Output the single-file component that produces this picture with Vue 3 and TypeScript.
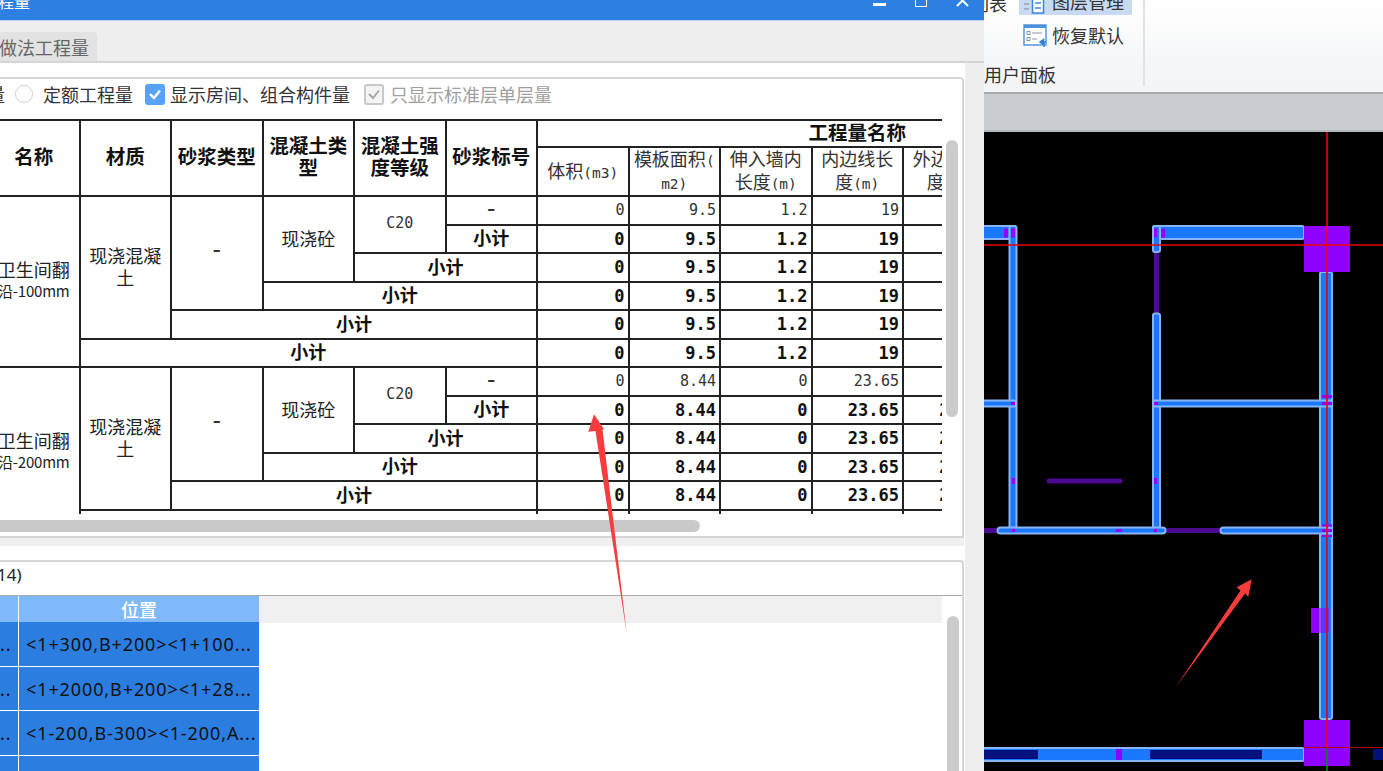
<script setup lang="ts">
interface Group {
  name: string[]
  first: string[]
  rest: string[]
}

const groups: Group[] = [
  {
    name: ['卫生间翻', '沿-100mm'],
    first: ['0', '9.5', '1.2', '19', '19'],
    rest: ['0', '9.5', '1.2', '19', '19'],
  },
  {
    name: ['卫生间翻', '沿-200mm'],
    first: ['0', '8.44', '0', '23.65', '23.65'],
    rest: ['0', '8.44', '0', '23.65', '23.65'],
  },
]

// how many columns the subtotal of rows 3 to 6 covers
const subtotalSpans = [2, 3, 4, 5]

const positions = [
  '<1+300,B+200><1+100...',
  '<1+2000,B+200><1+28...',
  '<1-200,B-300><1-200,A...',
  '',
]

function span(cols: number) {
  return { gridColumn: `span ${cols}` }
}
</script>

<template>
  <div class="screen">
    <section class="dialog">
      <header class="titlebar">
        <span class="title">程量</span>
        <div class="win-btns">
          <i class="btn-min"></i>
          <i class="btn-max"></i>
          <svg class="btn-close" width="13" height="8" viewBox="0 0 13 8">
            <path d="M1 -5 L12 6 M12 -5 L1 6" stroke="#fff" stroke-width="2" fill="none" />
          </svg>
        </div>
      </header>

      <div class="tabs">
        <div class="tab">做法工程量</div>
      </div>

      <div class="tab-body">
        <div class="panel upper">
          <div class="options">
            <span class="cut-text">量</span>
            <i class="radio"></i>
            <span class="opt">定额工程量</span>
            <i class="check on">
              <svg width="14" height="12" viewBox="0 0 14 12">
                <path d="M2 6 L6 10 L12 2.5" stroke="#fff" stroke-width="2.4" fill="none" />
              </svg>
            </i>
            <span class="opt">显示房间、组合构件量</span>
            <i class="check off">
              <svg width="14" height="12" viewBox="0 0 14 12">
                <path d="M2 6 L6 10 L12 2.5" stroke="#a8a8a8" stroke-width="2" fill="none" />
              </svg>
            </i>
            <span class="opt muted">只显示标准层单层量</span>
          </div>

          <div class="sheet-clip">
            <div class="sheet">
              <div class="cell head tall" style="grid-row: span 2">名称</div>
              <div class="cell head tall" style="grid-row: span 2">材质</div>
              <div class="cell head tall" style="grid-row: span 2">砂浆类型</div>
              <div class="cell head tall" style="grid-row: span 2">混凝土类型</div>
              <div class="cell head tall" style="grid-row: span 2">混凝土强度等级</div>
              <div class="cell head tall" style="grid-row: span 2">砂浆标号</div>
              <div class="cell head" style="grid-column: span 7">工程量名称</div>
              <div class="cell sub"><div>体积<span class="unit">(m3)</span></div></div>
              <div class="cell sub">
                <div>模板面积<span class="unit">(</span></div>
                <div class="unit">m2)</div>
              </div>
              <div class="cell sub">
                <div>伸入墙内</div>
                <div>长度<span class="unit">(m)</span></div>
              </div>
              <div class="cell sub">
                <div>内边线长</div>
                <div>度<span class="unit">(m)</span></div>
              </div>
              <div class="cell sub">
                <div>外边线长</div>
                <div>度<span class="unit">(m)</span></div>
              </div>
              <div class="cell sub"></div>
              <div class="cell sub"></div>

              <template v-for="group in groups" :key="group.name[1]">
                <div class="cell name" style="grid-row: span 6">
                  <span>{{ group.name[0] }}</span>
                  <span class="name-code">{{ group.name[1] }}</span>
                </div>
                <div class="cell text" style="grid-row: span 5">现浇混凝土</div>
                <div class="cell dash big" style="grid-row: span 4">-</div>
                <div class="cell text" style="grid-row: span 3">现浇砼</div>
                <div class="cell code" style="grid-row: span 2">C20</div>
                <div class="cell dash">-</div>
                <div v-for="(v, i) in group.first" :key="i" class="cell num">{{ v }}</div>
                <div class="cell num"></div>
                <div class="cell num"></div>

                <div class="cell total">小计</div>
                <div v-for="(v, i) in group.rest" :key="i" class="cell num bold">{{ v }}</div>
                <div class="cell num"></div>
                <div class="cell num"></div>

                <template v-for="cols in subtotalSpans" :key="cols">
                  <div class="cell total" :style="span(cols)">小计</div>
                  <div v-for="(v, i) in group.rest" :key="i" class="cell num bold">{{ v }}</div>
                  <div class="cell num"></div>
                  <div class="cell num"></div>
                </template>
              </template>
            </div>
          </div>

          <div class="hscroll"><i></i></div>
          <i class="vscroll"></i>
        </div>

        <div class="gap-band"></div>

        <div class="panel lower">
          <div class="lower-label">14)</div>
          <div class="list">
            <div class="list-head">
              <div class="lh-cell"></div>
              <div class="lh-cell">位置</div>
              <div class="lh-rest"></div>
            </div>
            <div v-for="(p, i) in positions" :key="i" class="list-row">
              <div class="sel dots">{{ p ? '..' : '' }}</div>
              <div class="sel pos">{{ p }}</div>
            </div>
            <i class="vscroll list-scroll"></i>
          </div>
        </div>
      </div>
    </section>

    <section class="workspace">
      <div class="ribbon">
        <div class="ribbon-main">
          <span class="cut-ribbon">列表</span>
          <div class="ribbon-btns">
            <div class="rb active">
              <svg width="24" height="15" viewBox="0 0 24 15">
                <path d="M1 4h5M1 9h5" stroke="#9aa4b0" stroke-width="1.5" />
                <rect x="9.5" y="-6" width="11" height="19" fill="#fff" stroke="#3a86d8" stroke-width="1.5" />
                <path d="M12 3h6M12 8h6" stroke="#3a86d8" stroke-width="1.5" />
              </svg>
              <span class="rb-cut">图层管理</span>
            </div>
            <div class="rb">
              <svg width="24" height="23" viewBox="0 0 24 23">
                <rect x="1" y="1" width="22" height="20" fill="#fff" stroke="#4a90d9" stroke-width="1.4" />
                <rect x="1" y="1" width="22" height="3" fill="#4a90d9" />
                <rect x="4" y="7.5" width="3" height="3" fill="none" stroke="#8b97a3" />
                <rect x="4" y="13.5" width="3" height="3" fill="none" stroke="#8b97a3" />
                <path d="M9 9h10M9 15h5" stroke="#8b97a3" stroke-width="1.2" />
                <path d="M23 18h-5M20.5 15.5 L17 18 L20.5 20.5 Z M21 18 v5" stroke="#2e7fd6" stroke-width="1.5" fill="#2e7fd6" />
              </svg>
              <span>恢复默认</span>
            </div>
          </div>
          <div class="ribbon-label">用户面板</div>
        </div>
        <i class="ribbon-sep"></i>
      </div>
      <div class="strip"></div>
      <div class="canvas">
        <svg width="399" height="639" viewBox="984 132 399 639">
          <g class="wall-thick">
            <rect x="980" y="226" width="36" height="13" rx="2" />
            <rect x="1153" y="226" width="151" height="13" rx="2" />
            <rect x="980" y="748" width="324" height="13" rx="2" />
          </g>
          <g class="beam">
            <rect x="984" y="528" width="14" height="5" />
            <rect x="1165" y="528" width="56" height="5" />
            <rect x="1154" y="252" width="5" height="62" />
            <rect x="1046.5" y="478.5" width="76" height="5" rx="2.5" />
          </g>
          <g class="wall">
            <rect x="1009.5" y="226" width="7" height="304" rx="2" />
            <rect x="1153" y="226" width="7" height="26" rx="2" />
            <rect x="1153" y="313.5" width="7" height="219" rx="2" />
            <rect x="1320" y="272" width="12" height="447" rx="2" />
            <rect x="980" y="400.5" width="36" height="6" rx="2" />
            <rect x="1153" y="400.5" width="179" height="6" rx="2" />
            <rect x="997.5" y="527.5" width="168" height="6" rx="3" />
            <rect x="1220.5" y="527.5" width="111" height="6" rx="3" />
          </g>
          <g class="mark">
            <rect x="1004" y="228.5" width="4" height="9" />
            <rect x="1011" y="228.5" width="4" height="9" />
            <rect x="1154" y="228.5" width="3" height="9" />
            <rect x="1161" y="228.5" width="4" height="9" />
            <rect x="1011" y="402" width="4" height="3" />
            <rect x="1154" y="402" width="4" height="3" />
            <rect x="1322" y="395" width="10" height="3" />
            <rect x="1322" y="402" width="10" height="3" />
            <rect x="1012" y="478" width="3" height="6" />
            <rect x="1154" y="478" width="3" height="6" />
            <rect x="1012" y="529" width="3" height="3" />
            <rect x="1154" y="529" width="3" height="3" />
            <rect x="1116" y="529" width="6" height="3" />
            <rect x="1322" y="524.5" width="10" height="2" />
            <rect x="1322" y="529" width="10" height="3" />
            <rect x="1322" y="535" width="10" height="2" />
          </g>
          <rect x="984" y="750" width="54" height="9" fill="#00107c" />
          <rect x="1150" y="750" width="112" height="9" fill="#00107c" />
          <rect x="1116" y="749" width="6" height="11" fill="#8f00ff" />
          <rect x="1373" y="749" width="10" height="11" fill="#00107c" />
          <rect x="1311" y="608" width="8" height="25" fill="#8f00ff" />
          <rect x="1319" y="608" width="10" height="25" fill="#8f00ff" opacity="0.55" />
          <rect x="1304" y="226" width="46" height="46" fill="#8f00ff" />
          <rect x="1304" y="720" width="46" height="46" fill="#8f00ff" />
          <path class="cross" d="M984 245H1383M1327 132V748" />
          <path class="cross dim" d="M1304 747.5H1383" />
          <path class="cross green" d="M1327 748V771" />
        </svg>
      </div>
    </section>

    <!-- red arrows someone drew on top of the screenshot -->
    <svg class="arrows" width="1383" height="771" viewBox="0 0 1383 771">
      <polygon points="626.7,633.3 595.5,431 588.3,431.7 594,414.3 604,429.3 602.5,429.5" fill="#f63c3c" />
      <polygon points="1175.7,687.3 1240.5,590.5 1236.7,587.3 1251.7,579.3 1248.3,596.7 1245,593.5" fill="#f63c3c" />
    </svg>
  </div>
</template>

<style>
html,
body {
  margin: 0;
  background: #fff;
}
</style>

<style scoped>
.screen {
  position: relative;
  display: flex;
  width: 1383px;
  height: 771px;
  overflow: hidden;
  font-family: "Noto Sans CJK SC", "Liberation Sans", sans-serif;
  color: #222;
}

.dialog {
  display: flex;
  flex-direction: column;
  width: 984px;
  flex: none;
  background: #eeeeee;
}

.titlebar {
  display: flex;
  justify-content: space-between;
  height: 20px;
  flex: none;
  overflow: hidden;
  background: #2d80e2;
  border-bottom: 1px solid #b9d3f1;
  box-sizing: content-box;
}

.title {
  margin-top: -10px;
  margin-left: -2px;
  font-size: 16px;
  line-height: 22px;
  color: #fff;
}

.win-btns {
  display: flex;
  align-items: flex-start;
  gap: 29px;
  padding-right: 15px;
}

.btn-min {
  width: 13px;
  height: 3px;
  margin-top: 3px;
  background: #fff;
}

.btn-max {
  width: 10px;
  height: 6px;
  border: 1.5px solid #fff;
  border-top: none;
}

.tabs {
  display: flex;
  align-items: flex-end;
  height: 40px;
  flex: none;
  border-bottom: 2px solid #d4d5d8;
}

.tab {
  width: 97px;
  height: 29px;
  display: flex;
  align-items: center;
  justify-content: flex-end;
  padding-right: 8px;
  box-sizing: border-box;
  background: #e2e2e2;
  border-radius: 0 4px 0 0;
  font-size: 18px;
  white-space: nowrap;
  overflow: hidden;
  color: #666;
}

.tab-body {
  display: flex;
  flex-direction: column;
  flex: 1;
  width: 965px;
  min-height: 0;
  padding-top: 14px;
  background: #fff;
}

.panel {
  position: relative;
  background: #fff;
  border-top: 2px solid #d6d6d6;
  border-right: 2px solid #d6d6d6;
  border-radius: 0 4px 0 0;
  box-sizing: border-box;
  margin-right: 1px;
}

.upper {
  height: 461px;
  flex: none;
  border-bottom: 2px solid #d6d6d6;
}

.options {
  display: flex;
  align-items: center;
  height: 30px;
  padding-bottom: 10px;
  font-size: 18px;
  color: #333;
  white-space: nowrap;
}

.cut-text {
  width: 5px;
  flex: none;
  overflow: hidden;
  direction: rtl;
}

.radio {
  width: 18px;
  height: 18px;
  margin-left: 10px;
  flex: none;
  box-sizing: border-box;
  border: 1.5px solid #d0d0d0;
  border-radius: 50%;
}

.opt {
  margin-left: 10px;
}

.muted {
  color: #a0a0a0;
}

.check {
  display: flex;
  align-items: center;
  justify-content: center;
  width: 20px;
  height: 21px;
  margin-left: 12px;
  flex: none;
  box-sizing: border-box;
  border-radius: 3px;
}

.check + .opt {
  margin-left: 5px;
}

.check.on {
  background: #58a2f6;
}

.check.off {
  margin-left: 14px;
  background: #f4f4f4;
  border: 2px solid #c8c8c8;
}

.check.off + .opt {
  margin-left: 6px;
}

.sheet-clip {
  width: 942px;
  height: 395px;
  overflow: hidden;
}

.sheet {
  display: grid;
  grid-template-columns: repeat(13, 91.5px);
  grid-template-rows: 27px 49px;
  grid-auto-rows: 28.5px;
  width: 1189.5px;
  margin-left: -11px;
  border-top: 2px solid #222;
}

.cell {
  display: flex;
  align-items: center;
  justify-content: center;
  box-sizing: border-box;
  border-right: 2px solid #222;
  border-bottom: 2px solid #222;
  font-size: 18px;
  line-height: 22px;
  text-align: center;
  color: #222;
  overflow: hidden;
}

.head,
.total {
  font-weight: 700;
  color: #111;
}

.head {
  font-size: 19.5px;
  padding-bottom: 4px;
}

.total {
  padding-bottom: 3px;
}

.sub {
  display: flex;
  flex-direction: column;
  font-size: 18px;
  line-height: 23px;
  color: #333;
  white-space: nowrap;
}

.unit {
  font-family: "DejaVu Sans Mono", monospace;
  font-size: 14.5px;
}

.name {
  flex-direction: column;
  line-height: 21px;
  padding-bottom: 3px;
  white-space: nowrap;
}

.name-code {
  font-size: 15px;
  letter-spacing: -0.2px;
}

.text {
  padding: 0 6px 2px;
}

.code,
.dash {
  font-family: "DejaVu Sans Mono", monospace;
  font-size: 15px;
  color: #333;
}

.code {
  padding-bottom: 4px;
}

.dash {
  font-size: 24px;
  padding-bottom: 3px;
}

.dash.big {
  padding-bottom: 7px;
}

.num {
  justify-content: flex-end;
  padding-right: 3px;
  font-family: "DejaVu Sans Mono", monospace;
  font-size: 15px;
  color: #333;
}

.num.bold {
  font-size: 17px;
  font-weight: 700;
  color: #111;
}

.hscroll {
  height: 12px;
  margin-top: 6px;
}

.hscroll i {
  display: block;
  width: 700px;
  height: 12px;
  background: #c9c9c9;
  border-radius: 0 6px 6px 0;
}

.vscroll {
  position: absolute;
  top: 61px;
  right: 4px;
  width: 12px;
  height: 277px;
  background: #cbcbcb;
  border-radius: 6px;
}

.gap-band {
  height: 8px;
  flex: none;
  background: #f0f0f0;
  margin-right: 1px;
}

.lower {
  flex: 1;
  min-height: 0;
  margin-top: 14px;
  overflow: hidden;
}

.lower-label {
  height: 33px;
  margin-left: -3px;
  font-size: 17px;
  line-height: 25px;
  font-family: "Noto Sans", sans-serif;
  overflow: hidden;
}

.list {
  position: relative;
  height: 200px;
  border-top: 1px solid #a9adb3;
}

.list-head {
  display: grid;
  grid-template-columns: 18px 240px 682px;
  gap: 1px;
  height: 25px;
  background: #fff;
}

.lh-cell {
  display: flex;
  align-items: center;
  justify-content: center;
  padding-bottom: 1px;
  box-sizing: border-box;
  background: #7fb9f9;
  font-size: 18px;
  font-weight: 500;
  color: #fff;
}

.lh-rest {
  background: #f0f0f0;
  margin-left: -1px;
}

.list-row {
  display: grid;
  grid-template-columns: 18px 240px;
  gap: 1px;
  height: 43.7px;
  margin-top: 1px;
}

.sel {
  display: flex;
  align-items: center;
  background: #2b7de0;
  font-family: "Noto Sans", "Liberation Sans", sans-serif;
  font-size: 18px;
  letter-spacing: 0.9px;
  color: #111;
  white-space: nowrap;
  overflow: hidden;
}

.pos {
  padding-left: 7px;
}

.list-scroll {
  top: 20px;
  right: 3px;
  height: 200px;
}

.workspace {
  display: flex;
  flex-direction: column;
  flex: 1;
  min-width: 0;
  box-shadow: inset 1px 0 0 #cfcfcf;
}

.ribbon {
  display: flex;
  height: 94px;
  flex: none;
  box-sizing: border-box;
  background: linear-gradient(#fff, #f1f3f5);
  border-bottom: 2px solid #a8aaac;
}

.ribbon-main {
  position: relative;
  display: flex;
  flex-direction: column;
  width: 159px;
  flex: none;
  overflow: hidden;
  font-size: 18px;
  color: #333;
  white-space: nowrap;
}

.cut-ribbon {
  position: absolute;
  top: -7px;
  left: -13px;
  line-height: 20px;
}

.ribbon-btns {
  display: flex;
  flex-direction: column;
  gap: 8px;
  padding-left: 35px;
}

.rb {
  display: flex;
  align-items: center;
  gap: 5px;
  width: 113px;
  height: 24px;
  padding-left: 4px;
  box-sizing: border-box;
  line-height: 24px;
}

.rb.active {
  height: 15px;
  background: #c7daf1;
  overflow: hidden;
}

.rb-cut {
  margin-top: -14px;
}

.ribbon-label {
  margin-top: 15px;
  line-height: 24px;
}

.ribbon-sep {
  width: 2px;
  height: 86px;
  background: #e0e2e4;
}

.strip {
  height: 36px;
  flex: none;
  background: #c9ccd0;
  border-bottom: 2px solid #b5b7ba;
  box-sizing: content-box;
}

.canvas {
  flex: 1;
  min-height: 0;
  background: #000;
  overflow: hidden;
}

.canvas svg {
  display: block;
}

.wall-thick rect,
.wall rect {
  fill: #1a78ff;
  stroke: #86b4f5;
  stroke-width: 2;
}

.beam rect {
  fill: #4b0a8f;
}

.mark rect {
  fill: #9500ff;
}

.cross {
  fill: none;
  stroke: #f00000;
  stroke-width: 1.6;
}

.cross.dim {
  stroke: #b00000;
  stroke-width: 1.2;
}

.cross.green {
  stroke: #008a00;
}

.arrows {
  position: absolute;
  top: 0;
  left: 0;
  pointer-events: none;
}
</style>
